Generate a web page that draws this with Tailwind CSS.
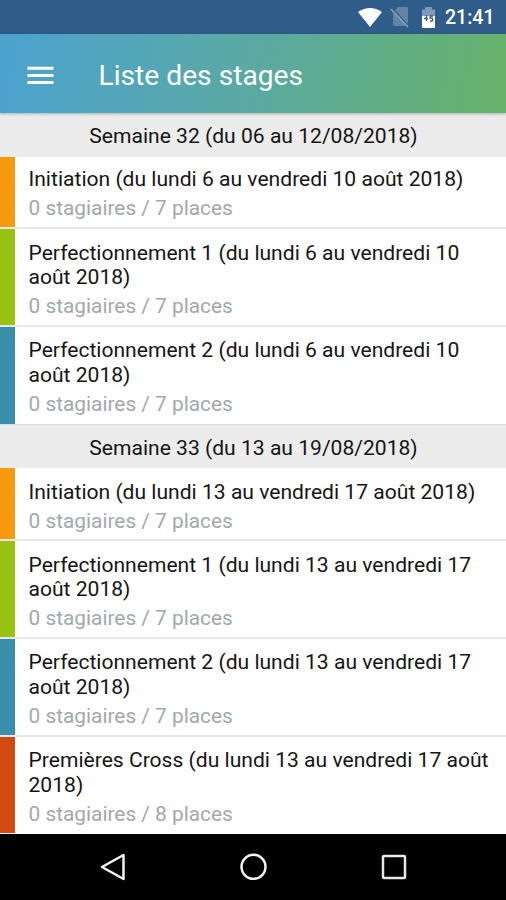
<!DOCTYPE html>
<html lang="fr">
<head>
<meta charset="utf-8">
<title>Liste des stages</title>
<script src="https://cdn.jsdelivr.net/npm/@tailwindcss/browser@4"></script>
</head>
<body class="w-[506px] h-[900px] overflow-hidden flex flex-col bg-white font-['Roboto','Noto_Sans',sans-serif] text-[#151515]">
<div class="h-[34px] shrink-0 bg-[#305c8a] flex items-center justify-end pr-[11px] text-white">
  <svg class="w-[26px] h-[20px] mr-[7px]" viewBox="0 0 26 20"><path d="M1 4Q13-4 25 4L13 19Z" fill="#fff" transform="translate(0 1)"/></svg>
  <svg class="w-[20px] h-[22px] mr-[11px]" viewBox="0 0 20 22"><path d="M8 1h8q2 0 2 2v16q0 1-1 1H5q-2 0-2-2V6Z" fill="#6484a7"/><path d="M1 1 19 21" stroke="#305c8a" stroke-width="2"/><path d="M1 3 18 21" stroke="#8ba4bd" stroke-width="1.600"/></svg>
  <svg class="w-[15px] h-[21px] mr-[9px]" viewBox="0 0 15 21"><path d="M4 0h7v2.500h3V9H1V2.500h3Z" fill="#7f9ab7"/><path d="M1 9h13v11q0 1-1 1H2q-1 0-1-1Z" fill="#fff"/><path d="M5.500 8v6M3 11.500h4M9 9h3M9 9v2h2q1.500 1.500 0 3H9" stroke="#3d5c7e" stroke-width="1.300" fill="none"/></svg>
  <span class="text-[19.500px] leading-[24px] font-medium w-[50px] whitespace-nowrap mt-[2px]">21:41</span>
</div>
<header class="h-[79px] shrink-0 flex items-center bg-linear-[100deg,#4ba2cf_0%,#5aa9a5_48%,#67b269_100%] relative z-10 shadow-[0_1px_3px_rgba(0,0,0,0.25)]">
  <svg class="w-[27px] h-[19px] ml-[26.500px] mt-[3px]" viewBox="0 0 27 19"><path d="M.5 2.300h26M.5 9.400h26M.5 16.500h26" stroke="#fff" stroke-width="3"/></svg>
  <h1 class="ml-[45px] mt-[4px] text-[28.200px] leading-[34px] text-white whitespace-nowrap">Liste des stages</h1>
</header>
<main class="h-[720.500px] shrink-0 text-[21.080px] leading-[24.500px]">
  <h2 class="h-[43.500px] pt-[11px] bg-[#ececec] text-center pl-[1px]">Semaine 32 (du 06 au 12/08/2018)</h2>
  <article class="h-[72.800px] border-b-2 border-[#e8e8e8] flex">
    <div class="w-[14.500px] shrink-0 bg-[#f69a10]"></div>
    <div class="pl-[14px] pt-[10.500px] whitespace-nowrap"><p>Initiation (du lundi 6 au vendredi 10 août 2018)</p><p class="mt-[4.500px] text-[20.850px] text-[#a1a9ac]">0 stagiaires / 7 places</p></div>
  </article>
  <article class="h-[97.700px] border-b-2 border-[#e8e8e8] flex">
    <div class="w-[14.500px] shrink-0 bg-[#9ac013]"></div>
    <div class="pl-[14px] pt-[11.300px] whitespace-nowrap"><p>Perfectionnement 1 (du lundi 6 au vendredi 10<br>août 2018)</p><p class="mt-[4.500px] text-[20.850px] text-[#a1a9ac]">0 stagiaires / 7 places</p></div>
  </article>
  <article class="h-[97.700px] border-b border-[#dddddd] flex">
    <div class="w-[14.500px] shrink-0 bg-[#398fab]"></div>
    <div class="pl-[14px] pt-[11.300px] whitespace-nowrap"><p>Perfectionnement 2 (du lundi 6 au vendredi 10<br>août 2018)</p><p class="mt-[4.500px] text-[20.850px] text-[#a1a9ac]">0 stagiaires / 7 places</p></div>
  </article>
  <h2 class="h-[43.800px] pt-[11px] bg-[#ececec] text-center pl-[1px]">Semaine 33 (du 13 au 19/08/2018)</h2>
  <article class="h-[72.800px] border-b-2 border-[#e8e8e8] flex">
    <div class="w-[14.500px] shrink-0 bg-[#f69a10]"></div>
    <div class="pl-[14px] pt-[11.300px] whitespace-nowrap"><p>Initiation (du lundi 13 au vendredi 17 août 2018)</p><p class="mt-[4.500px] text-[20.850px] text-[#a1a9ac]">0 stagiaires / 7 places</p></div>
  </article>
  <article class="h-[97.700px] border-b-2 border-[#e8e8e8] flex">
    <div class="w-[14.500px] shrink-0 bg-[#9ac013]"></div>
    <div class="pl-[14px] pt-[11.500px] whitespace-nowrap"><p>Perfectionnement 1 (du lundi 13 au vendredi 17<br>août 2018)</p><p class="mt-[4.500px] text-[20.850px] text-[#a1a9ac]">0 stagiaires / 7 places</p></div>
  </article>
  <article class="h-[97.700px] border-b-2 border-[#e8e8e8] flex">
    <div class="w-[14.500px] shrink-0 bg-[#398fab]"></div>
    <div class="pl-[14px] pt-[11.500px] whitespace-nowrap"><p>Perfectionnement 2 (du lundi 13 au vendredi 17<br>août 2018)</p><p class="mt-[4.500px] text-[20.850px] text-[#a1a9ac]">0 stagiaires / 7 places</p></div>
  </article>
  <article class="h-[96.800px] flex">
    <div class="w-[14.500px] shrink-0 bg-[#d04a12]"></div>
    <div class="pl-[14px] pt-[11.500px] whitespace-nowrap"><p>Premières Cross (du lundi 13 au vendredi 17 août<br>2018)</p><p class="mt-[4.500px] text-[20.850px] text-[#a1a9ac]">0 stagiaires / 8 places</p></div>
  </article>
</main>
<nav class="flex-1 bg-black flex items-start justify-center gap-[113px] pt-[19px] relative z-10">
  <svg class="w-[28px] h-[28px]" viewBox="0 0 28 28"><path d="M25.500 2v24L4 14Z" fill="none" stroke="#f4f4f4" stroke-width="2.500" stroke-linejoin="round"/></svg>
  <svg class="w-[28px] h-[28px]" viewBox="0 0 28 28"><circle cx="14.500" cy="13.800" r="12" fill="none" stroke="#f4f4f4" stroke-width="2.500"/></svg>
  <svg class="w-[28px] h-[28px]" viewBox="0 0 28 28"><rect x="3" y="3" width="22" height="22" rx="1" fill="none" stroke="#e8e8e8" stroke-width="2.500"/></svg>
</nav>
</body>
</html>
